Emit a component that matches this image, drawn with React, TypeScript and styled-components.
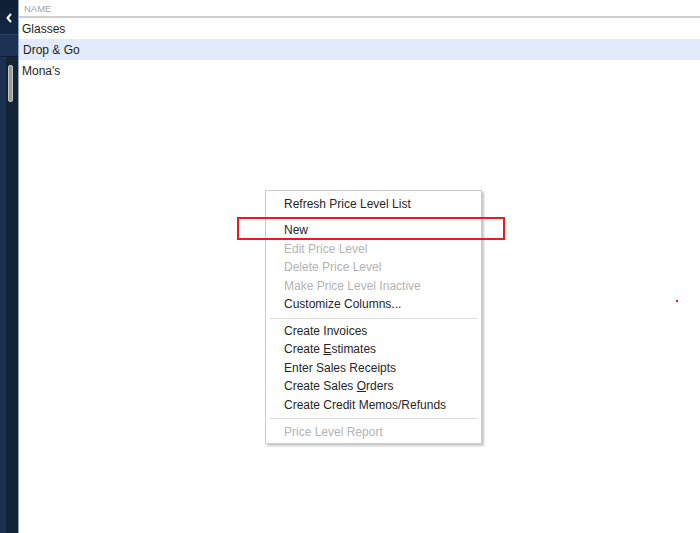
import React from 'react'
import styled, { createGlobalStyle } from 'styled-components'

const GlobalStyle = createGlobalStyle`
  html, body {
    margin: 0;
    padding: 0;
    background: #ffffff;
    font-family: "Liberation Sans", Arial, sans-serif;
  }
`

interface MenuEntry {
  label: React.ReactNode
  disabled?: boolean
}

const names = ['Glasses', 'Drop & Go', "Mona's"]

const groups: MenuEntry[][] = [
  [{ label: 'Refresh Price Level List' }],
  [
    { label: 'New' },
    { label: 'Edit Price Level', disabled: true },
    { label: 'Delete Price Level', disabled: true },
    { label: 'Make Price Level Inactive', disabled: true },
    { label: 'Customize Columns...' },
  ],
  [
    { label: 'Create Invoices' },
    { label: <>Create <u>E</u>stimates</> },
    { label: 'Enter Sales Receipts' },
    { label: <>Create Sales <u>O</u>rders</> },
    { label: 'Create Credit Memos/Refunds' },
  ],
  [{ label: 'Price Level Report', disabled: true }],
]

export default function App() {
  return (
    <Screen>
      <GlobalStyle />
      <Sidebar>
        <SidebarTop>
          <Chevron viewBox="0 0 8 10">
            <path d="M5.5 1.5 L2.5 5 L5.5 8.5" />
          </Chevron>
        </SidebarTop>
        <SidebarBand />
        <SidebarBody>
          <SidebarStrip />
          <ScrollTrack>
            <ScrollThumb />
          </ScrollTrack>
        </SidebarBody>
      </Sidebar>
      <ListPane>
        <ListHeader>NAME</ListHeader>
        {names.map((name, i) => (
          <ListRow key={name} selected={i === 1}>
            {name}
          </ListRow>
        ))}
      </ListPane>

      <ContextMenu>
        {groups.map((group, gi) => (
          <React.Fragment key={gi}>
            {gi > 0 && <Separator blank={gi === 1} />}
            {group.map((item, ii) => (
              <MenuItem key={ii} disabled={item.disabled}>
                {item.label}
              </MenuItem>
            ))}
          </React.Fragment>
        ))}
      </ContextMenu>
      <Highlight />
      <RedDot />
    </Screen>
  )
}

const Screen = styled.div`
  position: relative;
  display: flex;
  width: 700px;
  height: 533px;
  overflow: hidden;
  background: #ffffff;
`

const Sidebar = styled.div`
  width: 18px;
  flex-shrink: 0;
  display: flex;
  flex-direction: column;
  border-right: 1px solid #8ea2bc;
  background: #1b3152;
`

const SidebarTop = styled.div`
  height: 35px;
  display: flex;
  align-items: flex-start;
  justify-content: center;
  padding-top: 13px;
  box-sizing: border-box;
  background: linear-gradient(#0f1e33, #132844);
  border-bottom: 1px solid #2a4266;
`

const Chevron = styled.svg`
  width: 8px;
  height: 10px;
  fill: none;
  stroke: #ffffff;
  stroke-width: 2;
  stroke-linecap: round;
  stroke-linejoin: round;
`

const SidebarBand = styled.div`
  height: 21px;
  background: #1c3356;
  border-bottom: 1px solid #101d30;
`

const SidebarBody = styled.div`
  flex: 1;
  display: flex;
`

const SidebarStrip = styled.div`
  width: 6px;
  background: #1b3152;
`

const ScrollTrack = styled.div`
  flex: 1;
  background: #142437;
  padding: 8px 0 0 2px;
`

const ScrollThumb = styled.div`
  width: 5px;
  height: 37px;
  border-radius: 2px;
  background: #9a9a9a;
  border: 1px solid #c4c4c4;
  box-sizing: border-box;
`

const ListPane = styled.div`
  flex: 1;
  display: flex;
  flex-direction: column;
`

const ListHeader = styled.div`
  height: 16px;
  padding-left: 5px;
  font-size: 9.5px;
  line-height: 17px;
  color: #a3a3a3;
  border-bottom: 2px solid #cfcfcf;
`

const ListRow = styled.div<{ selected?: boolean }>`
  height: 21px;
  box-sizing: border-box;
  padding-top: 1px;
  line-height: 21px;
  padding-left: ${p => (p.selected ? 4 : 3)}px;
  font-size: 12px;
  color: #1e1e1e;
  background: ${p => (p.selected ? '#e1ebfb' : 'transparent')};
`

const ContextMenu = styled.div`
  position: absolute;
  left: 265px;
  top: 190px;
  width: 217px;
  box-sizing: border-box;
  padding: 4px 0 2px;
  background: #ffffff;
  border: 1px solid #cbcbcb;
  box-shadow: 2px 2px 2px rgba(0, 0, 0, 0.22);
`

const MenuItem = styled.div<{ disabled?: boolean }>`
  height: 18.5px;
  line-height: 18.5px;
  padding-left: 18px;
  font-size: 12px;
  white-space: nowrap;
  color: ${p => (p.disabled ? '#b3b3b3' : '#262626')};
`

const Separator = styled.div<{ blank?: boolean }>`
  height: ${p => (p.blank ? 7.5 : 8.25)}px;
  margin: 0 4px;
  box-sizing: border-box;
  padding-top: 4px;

  &::after {
    content: '';
    display: ${p => (p.blank ? 'none' : 'block')};
    height: 1px;
    background: #dadada;
  }
`

const Highlight = styled.div`
  position: absolute;
  left: 237px;
  top: 217px;
  width: 268px;
  height: 23px;
  box-sizing: border-box;
  border: 2px solid #f01818;
`

const RedDot = styled.div`
  position: absolute;
  left: 676px;
  top: 300px;
  width: 2px;
  height: 2px;
  background: #ff1010;
`
